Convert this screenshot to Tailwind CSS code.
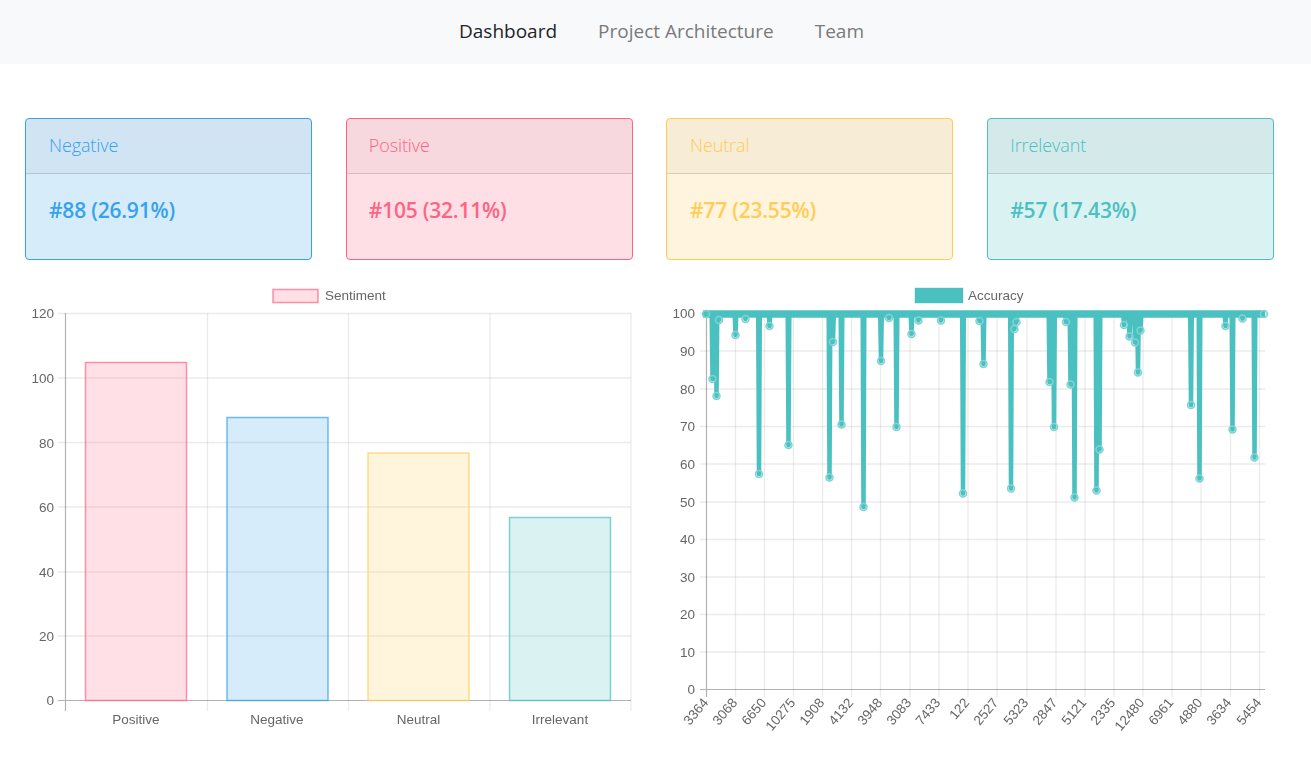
<!DOCTYPE html>
<html lang="en">
<head>
    <meta charset="UTF-8">
    <meta name="viewport" content="width=device-width, initial-scale=1.0">
    <title>Dashboard</title>
    <script src="https://cdn.jsdelivr.net/npm/@tailwindcss/browser@4"></script>
</head>
<body class="bg-white font-['Open_Sans','Noto_Sans',sans-serif] overflow-hidden">
    <!-- Navbar -->
    <nav class="h-16 bg-[#f8f9fa] flex justify-center items-center gap-[41px] pb-[2px] pl-3 text-[19px] leading-none font-medium">
        <a href="#" class="text-[#212529]">Dashboard</a>
        <a href="#" class="text-[#7a7a7a]">Project Architecture</a>
        <a href="#" class="text-[#7a7a7a]">Team</a>
    </nav>

    <!-- Sentiment cards -->
    <section class="grid grid-cols-4 gap-x-[34px] pl-[25px] pr-[37px] pt-[54px]">
        <div class="h-[142px] rounded border border-[#36a2eb] bg-[#d7ecfb] text-[#36a2eb] overflow-hidden">
            <div class="h-[55px] pl-[23px] pb-[2px] flex items-center text-[18px] font-light tracking-[-0.1px] bg-black/[.03] border-b border-black/[.13]">Negative</div>
            <div class="pl-[23px] pt-[21px] text-[21px] font-semibold tracking-[-0.2px]">#88 (26.91%)</div>
        </div>
        <div class="h-[142px] rounded border border-[#ff6384] bg-[#ffdfe6] text-[#ff6384] overflow-hidden">
            <div class="h-[55px] pl-[22px] pb-[2px] flex items-center text-[18px] font-light tracking-[-0.1px] bg-black/[.03] border-b border-black/[.13]">Positive</div>
            <div class="pl-[22px] pt-[21px] text-[21px] font-semibold tracking-[-0.2px]">#105 (32.11%)</div>
        </div>
        <div class="h-[142px] rounded border border-[#ffcd56] bg-[#fff4dd] text-[#ffcd56] overflow-hidden -ml-[0.5px]">
            <div class="h-[55px] pl-[23px] pb-[2px] flex items-center text-[18px] font-light tracking-[-0.1px] bg-black/[.03] border-b border-black/[.13]">Neutral</div>
            <div class="pl-[23px] pt-[21px] text-[21px] font-semibold tracking-[-0.2px]">#77 (23.55%)</div>
        </div>
        <div class="h-[142px] rounded border border-[#4bc0c0] bg-[#dbf2f2] text-[#4bc0c0] overflow-hidden">
            <div class="h-[55px] pl-[22px] pb-[2px] flex items-center text-[18px] font-light tracking-[-0.1px] bg-black/[.03] border-b border-black/[.13]">Irrelevant</div>
            <div class="pl-[22px] pt-[21px] text-[21px] font-semibold tracking-[-0.2px]">#57 (17.43%)</div>
        </div>
    </section>

    <!-- Charts -->
    <section class="flex pt-4 font-['Liberation_Sans',sans-serif] text-[13.5px]">
        <!-- Bar chart, viewBox keeps page coordinates -->
        <svg width="656" height="484" viewBox="0 276 656 484" class="block shrink-0 fill-[#666] blur-[0.35px]">
            <g class="stroke-black/[.08]" stroke-width="1.3">
                <path d="M58 313.500H631M58 378H631M58 442.500H631M58 507H631M58 572H631M58 636H631"/>
                <path d="M207.500 313V711M348.500 313V711M490 313V711M631 313V711"/>
            </g>
            <path d="M65.500 313V711M58 700.500H631" class="stroke-black/30" stroke-width="1.2" fill="none"/>

            <rect x="273" y="289.500" width="45" height="13" class="fill-[#ff6384]/20 stroke-[#ff6384]/70" stroke-width="1.5"/>
            <text x="325" y="300">Sentiment</text>

            <rect x="85.500" y="362.500" width="101" height="338" class="fill-[#ff6384]/20 stroke-[#ff6384]/70" stroke-width="1.5"/>
            <rect x="227" y="417.500" width="101" height="283" class="fill-[#36a2eb]/20 stroke-[#36a2eb]/70" stroke-width="1.5"/>
            <rect x="368" y="453" width="101" height="247.500" class="fill-[#ffcd56]/20 stroke-[#ffcd56]/70" stroke-width="1.5"/>
            <rect x="509.500" y="517.500" width="101" height="183" class="fill-[#4bc0c0]/20 stroke-[#4bc0c0]/70" stroke-width="1.5"/>

            <g text-anchor="end">
                <text x="54" y="318">120</text>
                <text x="54" y="383">100</text>
                <text x="54" y="447.500">80</text>
                <text x="54" y="512">60</text>
                <text x="54" y="576.500">40</text>
                <text x="54" y="640.500">20</text>
                <text x="54" y="705">0</text>
            </g>
            <g text-anchor="middle">
                <text x="136" y="724">Positive</text>
                <text x="277" y="724">Negative</text>
                <text x="418.500" y="724">Neutral</text>
                <text x="560" y="724">Irrelevant</text>
            </g>
        </svg>

        <!-- Accuracy line chart, viewBox keeps page coordinates -->
        <svg width="655" height="484" viewBox="656 276 655 484" class="block shrink-0 fill-[#666] blur-[0.35px]">
            <g class="stroke-black/[.08]" stroke-width="1.3">
                <path d="M700 313.500H1265M700 351H1265M700 389H1265M700 426.500H1265M700 464H1265M700 502H1265M700 539.500H1265M700 577H1265M700 614.500H1265M700 652H1265"/>
                <path d="M735.500 313V697M764.500 313V697M793.500 313V697M822.500 313V697M851.500 313V697M880.500 313V697M910 313V697M939 313V697M968 313V697M997 313V697M1027 313V697M1056 313V697M1085 313V697M1114 313V697M1143 313V697M1172 313V697M1201 313V697M1230.500 313V697M1259.500 313V697"/>
            </g>
            <path d="M706.500 313V697M700 689.500H1265" class="stroke-black/30" stroke-width="1.2" fill="none"/>

            <rect x="915" y="288" width="48" height="15" class="fill-[#4bc0c0] stroke-[#4bc0c0]/40"/>
            <text x="968" y="300">Accuracy</text>

            <path d="M703 314 H1265" fill="none" stroke-width="7.500" class="stroke-[#4bc0c0]"/>
            <path id="accuracyLine" fill="none" stroke-width="4.500" stroke-linejoin="round" class="stroke-[#4bc0c0]"/>
            <g id="accuracyPoints" stroke-width="1.500" class="fill-[#4bc0c0]/30 stroke-[#7fd3d3]"></g>

            <g text-anchor="end">
                <text x="695" y="318">100</text>
                <text x="695" y="355.500">90</text>
                <text x="695" y="393.500">80</text>
                <text x="695" y="431">70</text>
                <text x="695" y="468.500">60</text>
                <text x="695" y="506.500">50</text>
                <text x="695" y="544">40</text>
                <text x="695" y="581.500">30</text>
                <text x="695" y="619">20</text>
                <text x="695" y="656.500">10</text>
                <text x="695" y="694">0</text>
            </g>
            <g text-anchor="end">
                <text transform="translate(709 703) rotate(-50)">3364</text>
                <text transform="translate(738 703) rotate(-50)">3068</text>
                <text transform="translate(767 703) rotate(-50)">6650</text>
                <text transform="translate(796 703) rotate(-50)">10275</text>
                <text transform="translate(825 703) rotate(-50)">1908</text>
                <text transform="translate(854 703) rotate(-50)">4132</text>
                <text transform="translate(883 703) rotate(-50)">3948</text>
                <text transform="translate(912 703) rotate(-50)">3083</text>
                <text transform="translate(941 703) rotate(-50)">7433</text>
                <text transform="translate(970 703) rotate(-50)">122</text>
                <text transform="translate(999 703) rotate(-50)">2527</text>
                <text transform="translate(1029 703) rotate(-50)">5323</text>
                <text transform="translate(1058 703) rotate(-50)">2847</text>
                <text transform="translate(1087 703) rotate(-50)">5121</text>
                <text transform="translate(1116 703) rotate(-50)">2335</text>
                <text transform="translate(1145 703) rotate(-50)">12480</text>
                <text transform="translate(1174 703) rotate(-50)">6961</text>
                <text transform="translate(1203 703) rotate(-50)">4880</text>
                <text transform="translate(1232 703) rotate(-50)">3634</text>
                <text transform="translate(1262 703) rotate(-50)">5454</text>
            </g>
        </svg>
    </section>

    <script>
        // readings that dropped below 100, as [x, y] on the plot
        var drops = [[712.5,379],[716.5,396],[719,320],[735.5,335],[745.5,319],[759,474],[769.5,326],[788.5,445],[829.5,477.5],[833,342],[841.5,424.5],[863.5,507],[881,361],[889,318],[896.5,427],[911.5,334],[918.5,320.5],[941,320.5],[963,493.5],[979.5,321],[983.5,364],[1011,488.5],[1014.5,329],[1016.5,322],[1049.5,382],[1054,427],[1066,322],[1070.5,384.5],[1074.5,497.5],[1096.5,490.5],[1099.5,449.5],[1124,325],[1129.5,336.5],[1135,342.5],[1138,372.5],[1140.5,330.5],[1191,405],[1199.5,478.5],[1225.5,326],[1232.5,429.5],[1242.5,318.5],[1254.5,457.5]];
        var top_y = 314, d = "M703.5 " + top_y;
        var points = document.getElementById("accuracyPoints"), svgNs = "http://www.w3.org/2000/svg";
        function addPoint(x, y) {
            var c = document.createElementNS(svgNs, "circle");
            c.setAttribute("cx", x); c.setAttribute("cy", y); c.setAttribute("r", 3.5);
            points.appendChild(c);
        }
        drops.forEach(function (p) {
            d += " L" + (p[0] - 0.8) + " " + top_y + " L" + p[0] + " " + p[1] + " L" + (p[0] + 0.8) + " " + top_y;
        });
        document.getElementById("accuracyLine").setAttribute("d", d);
        drops.forEach(function (p) { addPoint(p[0], p[1]); });
        addPoint(706, top_y); addPoint(1264, top_y);
    </script>
</body>
</html>
